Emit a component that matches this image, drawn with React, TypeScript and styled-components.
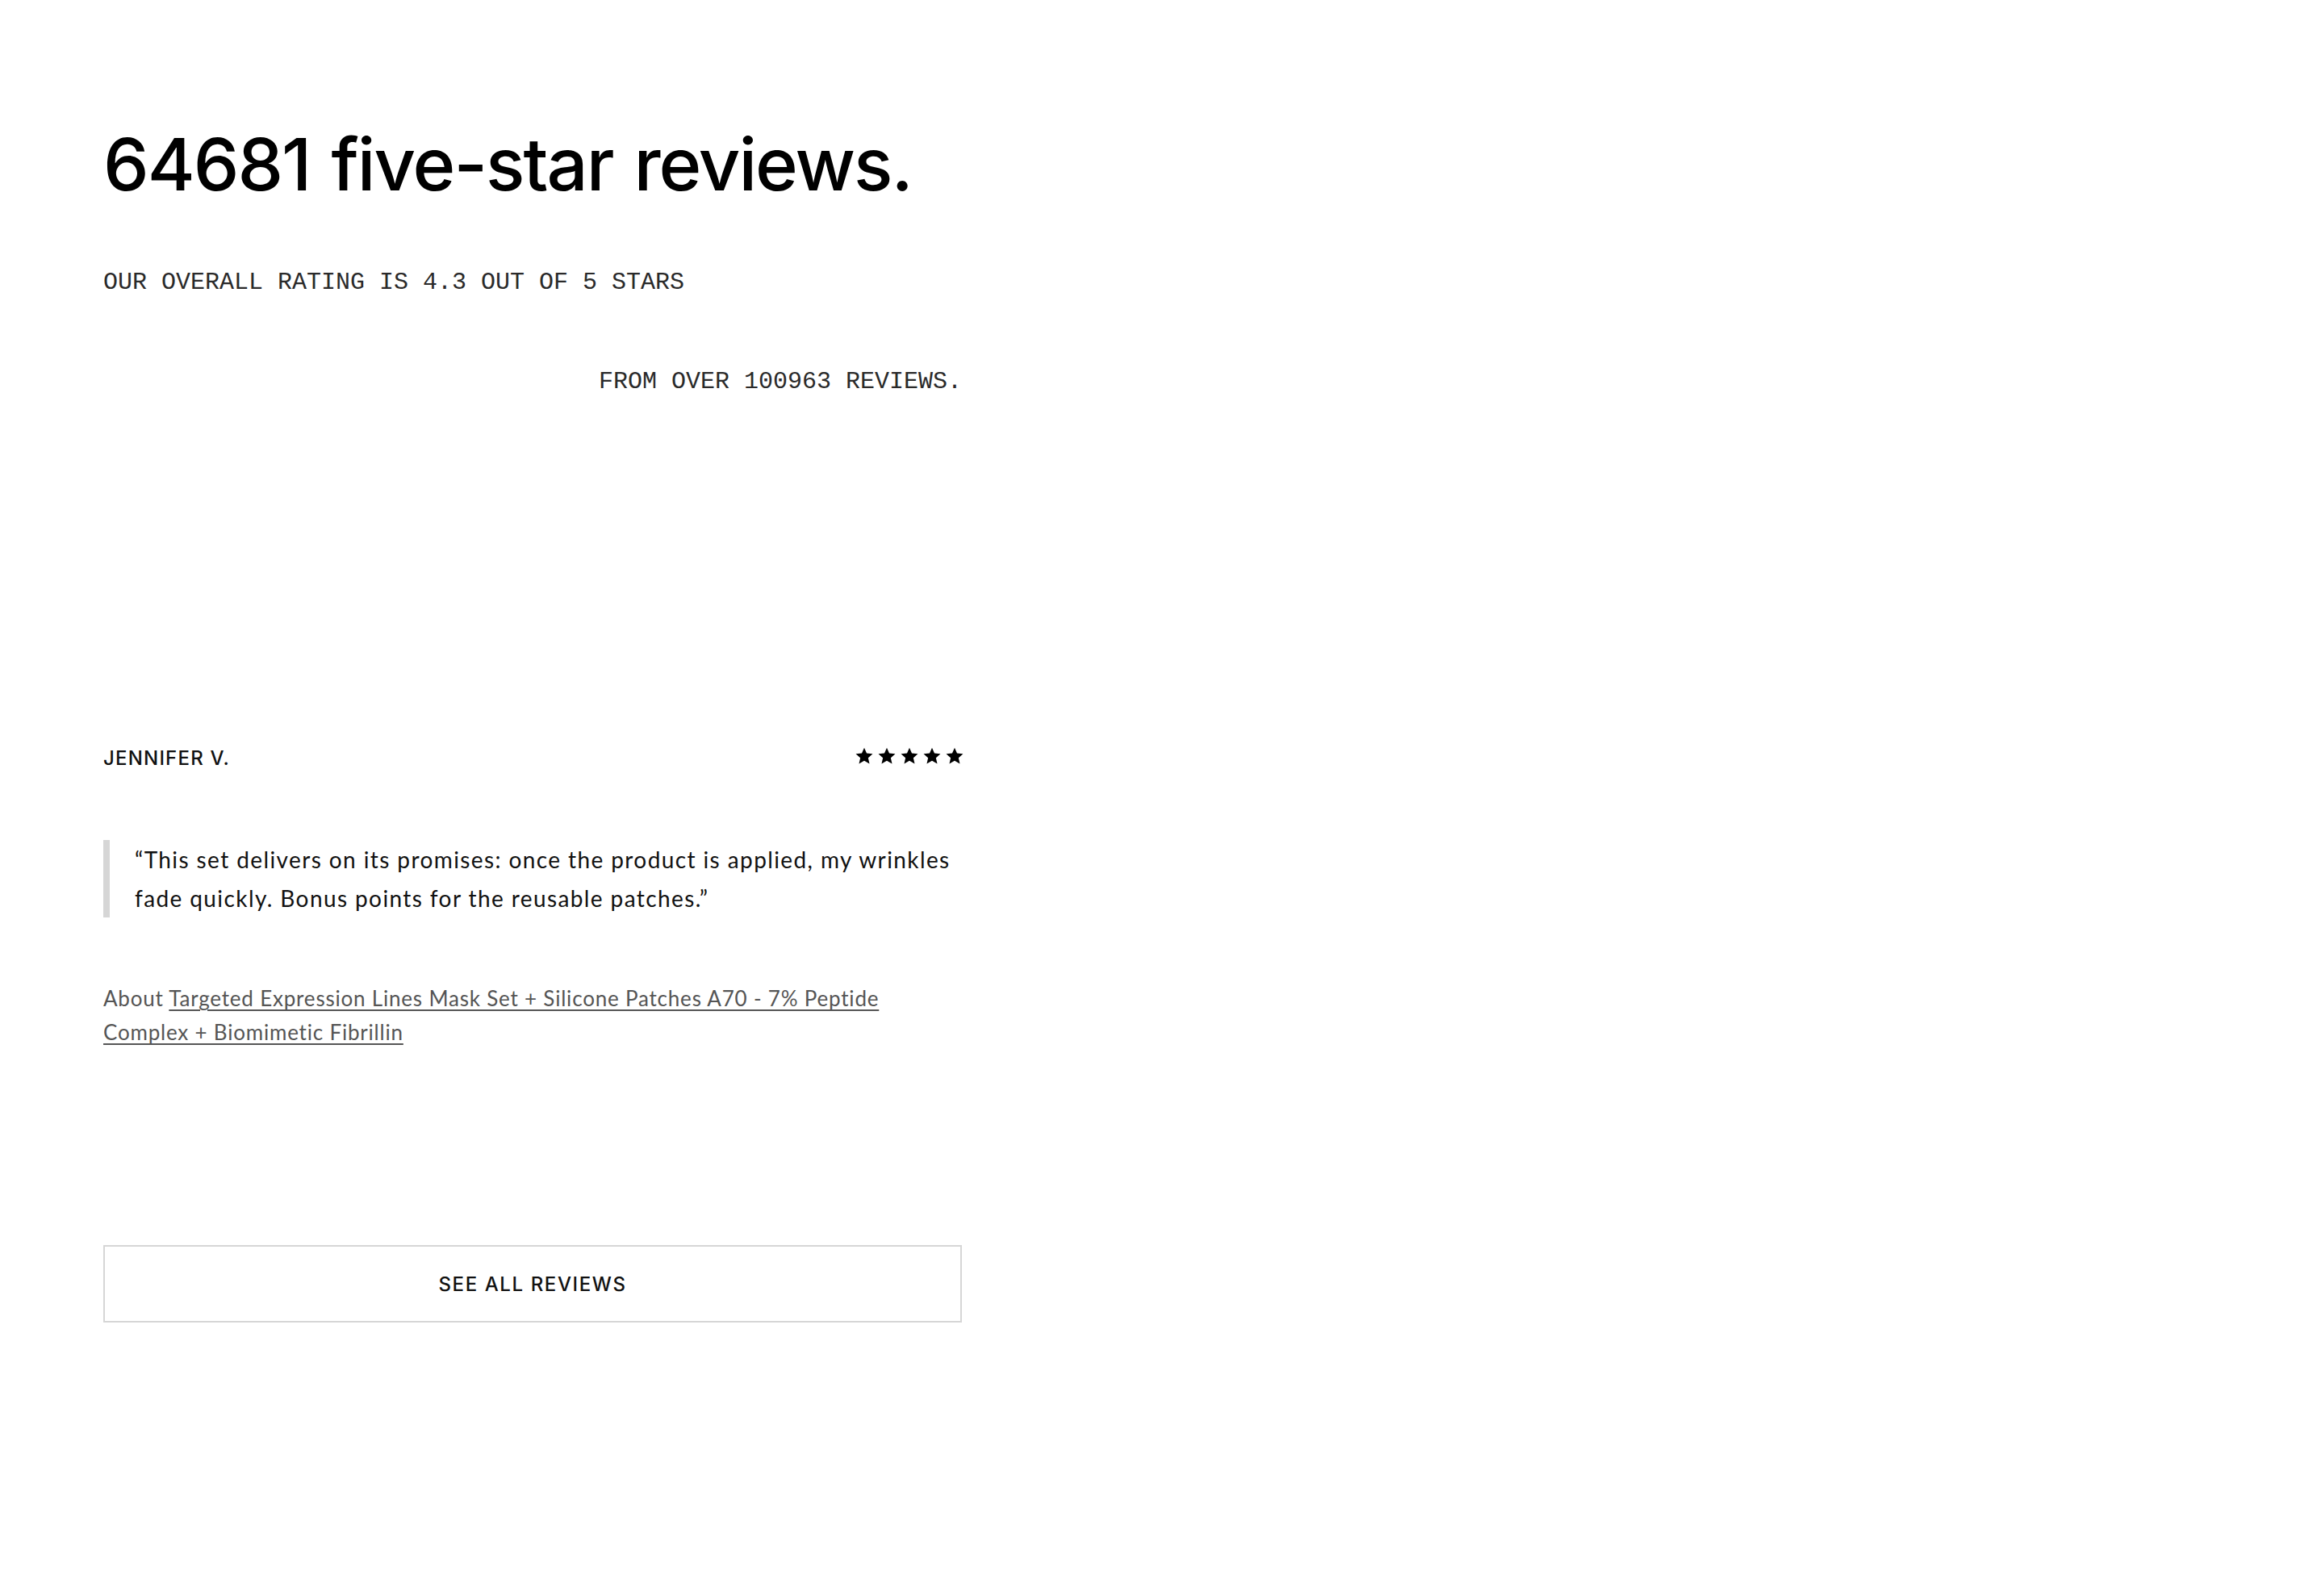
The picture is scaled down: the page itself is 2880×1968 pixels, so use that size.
import React from 'react';
import styled, { createGlobalStyle } from 'styled-components';

const GlobalStyle = createGlobalStyle`
  html, body {
    margin: 0;
    padding: 0;
    background: #ffffff;
  }
  * {
    box-sizing: border-box;
  }
`;

const colors = {
  text: '#111111',
  mono: '#2a2a2a',
  subtext: '#555555',
  rule: '#d6d6d6',
};

const Page = styled.main`
  display: grid;
  grid-template-columns: 1064px 1fr;
  padding: 150px 128px 200px;
  min-height: 1968px;
  background: #ffffff;
`;

const Column = styled.section`
  display: flex;
  flex-direction: column;
`;

const Title = styled.h1`
  margin: 0;
  font-family: Inter, 'Liberation Sans', sans-serif;
  font-weight: 500;
  font-size: 90px;
  line-height: 108px;
  letter-spacing: -2px;
  word-spacing: 4px;
  color: #000;
`;

const Summary = styled.div`
  display: flex;
  flex-direction: column;
  gap: 78px;
  margin-top: 70px;
`;

const MonoLine = styled.p<{ $align?: 'left' | 'right' }>`
  margin: 0;
  font-family: 'Liberation Mono', 'DejaVu Sans Mono', monospace;
  font-size: 30px;
  line-height: 45px;
  color: ${colors.mono};
  text-align: ${(p) => p.$align || 'left'};
`;

const Review = styled.article`
  display: flex;
  flex-direction: column;
  margin-top: 428px;
`;

const ReviewHead = styled.div`
  display: flex;
  justify-content: space-between;
  align-items: center;
  height: 32px;
`;

const Author = styled.span`
  font-family: Inter, 'Liberation Sans', sans-serif;
  font-weight: 500;
  font-size: 24px;
  line-height: 32px;
  letter-spacing: 1.2px;
  color: ${colors.text};
`;

const Stars = styled.div`
  display: flex;
  gap: 6px;
  margin-top: -6px;
  margin-right: -2px;
`;

const Quote = styled.blockquote`
  margin: 85px 0 0;
  padding: 0 0 0 31px;
  border-left: 8px solid ${colors.rule};
  font-family: Lato, 'Liberation Sans', sans-serif;
  font-size: 28px;
  line-height: 48px;
  letter-spacing: 1.4px;
  color: ${colors.text};
`;

const About = styled.p`
  margin: 79px 0 0;
  font-family: Lato, 'Liberation Sans', sans-serif;
  font-size: 26px;
  line-height: 42px;
  letter-spacing: 0.8px;
  color: ${colors.subtext};

  & a {
    color: ${colors.subtext};
    text-decoration: underline;
    text-underline-offset: 4px;
    text-decoration-thickness: 2px;
  }
`;

const SeeAll = styled.button`
  margin-top: 243px;
  height: 96px;
  width: 100%;
  background: #fff;
  border: 2px solid ${colors.rule};
  font-family: Inter, 'Liberation Sans', sans-serif;
  font-weight: 500;
  font-size: 24px;
  letter-spacing: 1.6px;
  color: ${colors.text};
  cursor: pointer;
`;

function Star() {
  return (
    <svg width="22" height="22" viewBox="0 0 24 24" aria-hidden>
      <path
        d="M12 0.8l3.3 7.4 8.1.8-6.1 5.4 1.8 8-7.1-4.2-7.1 4.2 1.8-8L0.6 9l8.1-.8z"
        fill="#000"
      />
    </svg>
  );
}

export default function App() {
  return (
    <>
      <GlobalStyle />
      <Page>
        <Column>
          <Title>64681 five-star reviews.</Title>

          <Summary>
            <MonoLine>OUR OVERALL RATING IS 4.3 OUT OF 5 STARS</MonoLine>
            <MonoLine $align="right">FROM OVER 100963 REVIEWS.</MonoLine>
          </Summary>

          <Review>
            <ReviewHead>
              <Author>JENNIFER V.</Author>
              <Stars>
                {[0, 1, 2, 3, 4].map((i) => (
                  <Star key={i} />
                ))}
              </Stars>
            </ReviewHead>
            <Quote>
              “This set delivers on its promises: once the product is applied,
              my wrinkles fade quickly. Bonus points for the reusable patches.”
            </Quote>
            <About>
              About{' '}
              <a href="#">
                Targeted Expression Lines Mask Set + Silicone Patches A70 - 7%
                Peptide Complex + Biomimetic Fibrillin
              </a>
            </About>
          </Review>

          <SeeAll>SEE ALL REVIEWS</SeeAll>
        </Column>
        <div />
      </Page>
    </>
  );
}
